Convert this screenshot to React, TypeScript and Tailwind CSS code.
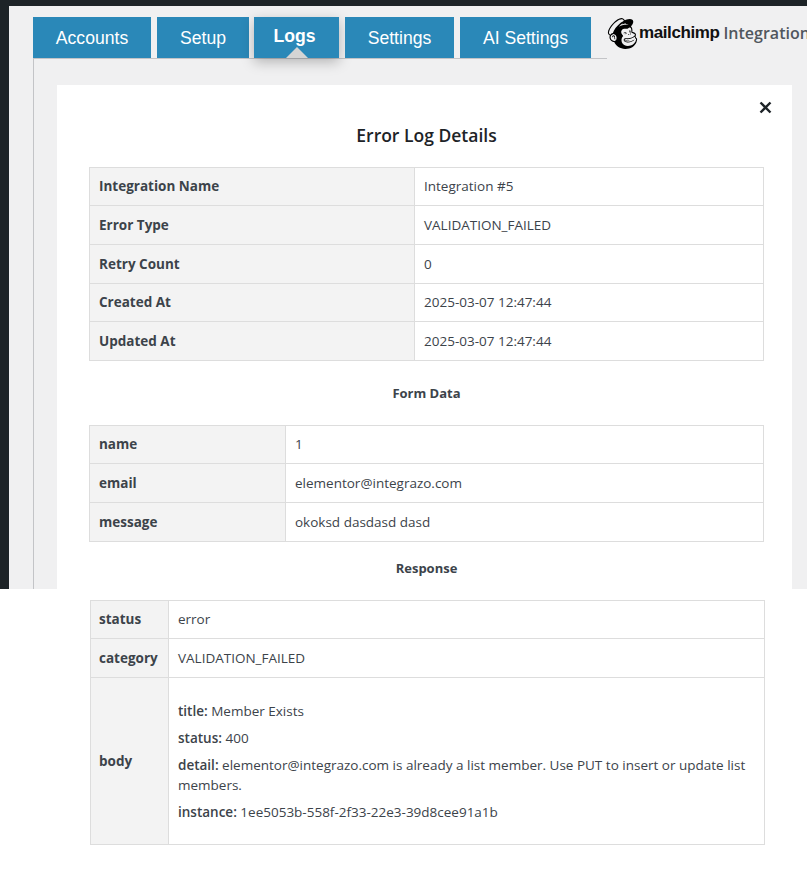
import { SiMailchimp } from "react-icons/si";

const font = "font-['Open_Sans','Liberation_Sans',sans-serif]";

const tabs = [
  { name: "Accounts", cls: "w-[118px] mr-[6px]" },
  { name: "Setup", cls: "w-[92px] mr-[5px]" },
  { name: "Logs", cls: "w-[85px] mr-[6px]", active: true },
  { name: "Settings", cls: "w-[109px] mr-[6px]" },
  { name: "AI Settings", cls: "w-[131px]" },
];

const details = [
  ["Integration Name", "Integration #5"],
  ["Error Type", "VALIDATION_FAILED"],
  ["Retry Count", "0"],
  ["Created At", "2025-03-07 12:47:44"],
  ["Updated At", "2025-03-07 12:47:44"],
];

const formData = [
  ["name", "1"],
  ["email", "elementor@integrazo.com"],
  ["message", "okoksd dasdasd dasd"],
];

function DataTable({ rows, labelWidth }: { rows: string[][]; labelWidth: string }) {
  return (
    <table className="w-full table-fixed border-collapse text-[13.5px] text-[#3c434a]">
      <colgroup>
        <col className={labelWidth} />
        <col />
      </colgroup>
      <tbody>
        {rows.map(([label, value]) => (
          <tr key={label} className="h-[39px] first:h-[38px] [&:nth-child(4)]:h-[38px]">
            <th className="border border-[#dddddd] bg-[#f3f3f3] px-[9px] text-left font-bold">{label}</th>
            <td className="border border-[#dddddd] px-[9px]">{value}</td>
          </tr>
        ))}
      </tbody>
    </table>
  );
}

export default function App() {
  return (
    <div className={`flex h-[872px] w-[807px] flex-col overflow-hidden bg-white ${font}`}>
      {/* admin page, cut off below the Response heading */}
      <div className="h-[589px] overflow-hidden bg-[#1d2327] pl-[9px] pt-[6px]">
        <div className="h-full bg-[#f0f0f1] pl-[24px] pt-[11px]">
          <div className="flex h-[42px] w-[798px]">
            <div className="flex h-[42px] w-[574px] border-b border-[#c3c4c7]">
              {tabs.map((tab) => (
                <div
                  key={tab.name}
                  className={`relative flex h-[41px] items-center justify-center bg-[#2a88b8] pt-[2px] font-['Liberation_Sans',sans-serif] text-[17.6px] text-white ${tab.cls} ${
                    tab.active ? "font-bold shadow-[0_4px_12px_rgba(0,0,0,0.25)]" : ""
                  }`}
                >
                  <span className={tab.active ? "-mt-[5px] -ml-[4px]" : ""}>{tab.name}</span>
                  {tab.active && (
                    <span className="absolute bottom-0 left-[32px] h-0 w-0 border-x-[11px] border-b-[11px] border-x-transparent border-b-[#d4d4d4]" />
                  )}
                </div>
              ))}
            </div>
            <div className="flex h-[32px] items-center whitespace-nowrap">
              <SiMailchimp className="mr-[1px] text-[31px] text-black" />
              <span className="font-['Liberation_Sans',sans-serif] text-[17px] font-bold tracking-[-0.4px] text-[#111111]">mailchimp</span>
              <span className="ml-[4px] text-[16px] font-semibold text-[#50575e]">Integrations</span>
            </div>
          </div>
          <div className="h-full border-l border-[#c3c4c7] pl-[23px] pt-[26px]">
            <div className="relative h-full w-[735px] bg-white pl-[32px] pr-[28px] pt-[38px]">
              <svg className="absolute right-[20px] top-[16px] h-[13px] w-[13px]" viewBox="0 0 13 13">
                <path d="M1.5 1.5l10 10M11.5 1.5l-10 10" stroke="#1d2327" strokeWidth="2.4" fill="none" />
              </svg>
              <h2 className="mb-[18px] -mt-[1px] text-center text-[17.5px] font-semibold leading-[27px] text-[#1d2327]">Error Log Details</h2>
              <DataTable rows={details} labelWidth="w-[325px]" />
              <h3 className="mb-[22px] mt-[22px] text-center text-[13px] font-bold leading-[20px] text-[#3c434a]">Form Data</h3>
              <DataTable rows={formData} labelWidth="w-[196px]" />
              <h3 className="mt-[16px] text-center text-[13px] font-bold leading-[20px] text-[#3c434a]">Response</h3>
            </div>
          </div>
        </div>
      </div>

      {/* response table */}
      <div className="pl-[90px] pt-[11px]">
        <table className="w-[675px] table-fixed border-collapse text-[13.5px] text-[#3c434a]">
          <colgroup>
            <col className="w-[78px]" />
            <col />
          </colgroup>
          <tbody>
            <tr className="h-[38px]">
              <th className="border border-[#dddddd] bg-[#f3f3f3] px-[8px] text-left font-bold">status</th>
              <td className="border border-[#dddddd] px-[9px]">error</td>
            </tr>
            <tr className="h-[39px]">
              <th className="border border-[#dddddd] bg-[#f3f3f3] px-[8px] text-left font-bold">category</th>
              <td className="border border-[#dddddd] px-[9px]">VALIDATION_FAILED</td>
            </tr>
            <tr className="h-[167px]">
              <th className="border border-[#dddddd] bg-[#f3f3f3] px-[8px] text-left font-bold">body</th>
              <td className="border border-[#dddddd] px-[9px] leading-[20px]">
                <p className="mb-[7px]"><b className="font-semibold">title:</b> Member Exists</p>
                <p className="mb-[7px]"><b className="font-semibold">status:</b> 400</p>
                <p className="mb-[7px]"><b className="font-semibold">detail:</b> elementor@integrazo.com is already a list member. Use PUT to insert or update list members.</p>
                <p><b className="font-semibold">instance:</b> 1ee5053b-558f-2f33-22e3-39d8cee91a1b</p>
              </td>
            </tr>
          </tbody>
        </table>
      </div>
    </div>
  );
}
